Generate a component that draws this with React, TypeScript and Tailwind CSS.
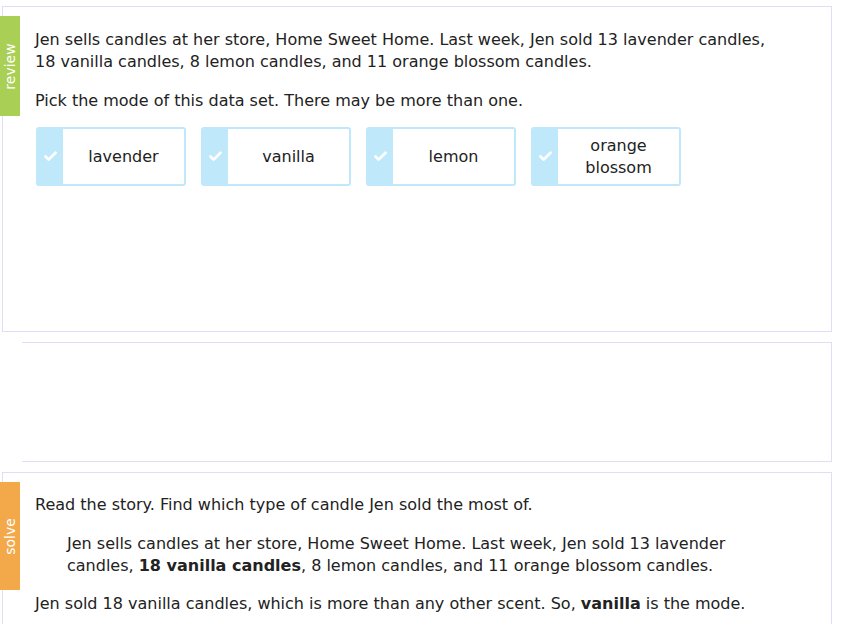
import { Check } from "lucide-react";

const choices = [["lavender"], ["vanilla"], ["lemon"], ["orange", "blossom"]];

function Choice({ lines }: { lines: string[] }) {
  return (
    <div className="flex w-[150px] h-[59px] border-2 border-[#bfe8fb] rounded-[3px] overflow-hidden">
      <div className="w-[25px] bg-[#bfe8fb] flex items-center justify-center">
        <Check size={15} strokeWidth={4.5} className="text-white" />
      </div>
      <div className="flex-1 flex flex-col items-center justify-center leading-[22px] text-[16px] text-[#222]">
        {lines.map((l) => (
          <span key={l}>{l}</span>
        ))}
      </div>
    </div>
  );
}

export default function App() {
  return (
    <div className="w-[851px] h-[624px] bg-white overflow-hidden font-['DejaVu_Sans',Verdana,sans-serif] text-[16px] text-[#222] pt-[6px] pl-[2px] pr-[19px] flex flex-col gap-[10px]">
      <section className="relative h-[326px] border border-[#e2ddf6] pl-[32px] pt-[22px]">
        <div className="absolute -left-[3px] top-[9px] w-[20px] h-[100px] bg-[#a9cf54] flex items-center justify-center">
          <span className="-rotate-90 text-white text-[14px]">review</span>
        </div>
        <p className="leading-[22px]">
          Jen sells candles at her store, Home Sweet Home. Last week, Jen sold 13 lavender candles,
          <br />
          18 vanilla candles, 8 lemon candles, and 11 orange blossom candles.
        </p>
        <p className="mt-[17px] leading-[22px]">Pick the mode of this data set. There may be more than one.</p>
        <div className="flex gap-[15px] mt-[15px] ml-[1px]">
          {choices.map((c) => (
            <Choice key={c.join()} lines={c} />
          ))}
        </div>
      </section>
      <section className="h-[120px] border border-[#e2ddf6] border-l-0 ml-[20px]" />
      <section className="relative flex-1 border border-[#e2ddf6] border-b-0 pl-[32px] pt-[21px]">
        <div className="absolute -left-[3px] top-[9px] w-[20px] h-[108px] bg-[#f3a84a] flex items-center justify-center">
          <span className="-rotate-90 text-white text-[14px]">solve</span>
        </div>
        <p className="leading-[22px]">Read the story. Find which type of candle Jen sold the most of.</p>
        <p className="mt-[17px] ml-[32px] leading-[22px]">
          Jen sells candles at her store, Home Sweet Home. Last week, Jen sold 13 lavender
          <br />
          candles, <b>18 vanilla candles</b>, 8 lemon candles, and 11 orange blossom candles.
        </p>
        <p className="mt-[16px] leading-[22px]">
          Jen sold 18 vanilla candles, which is more than any other scent. So, <b>vanilla</b> is the mode.
        </p>
      </section>
    </div>
  );
}
